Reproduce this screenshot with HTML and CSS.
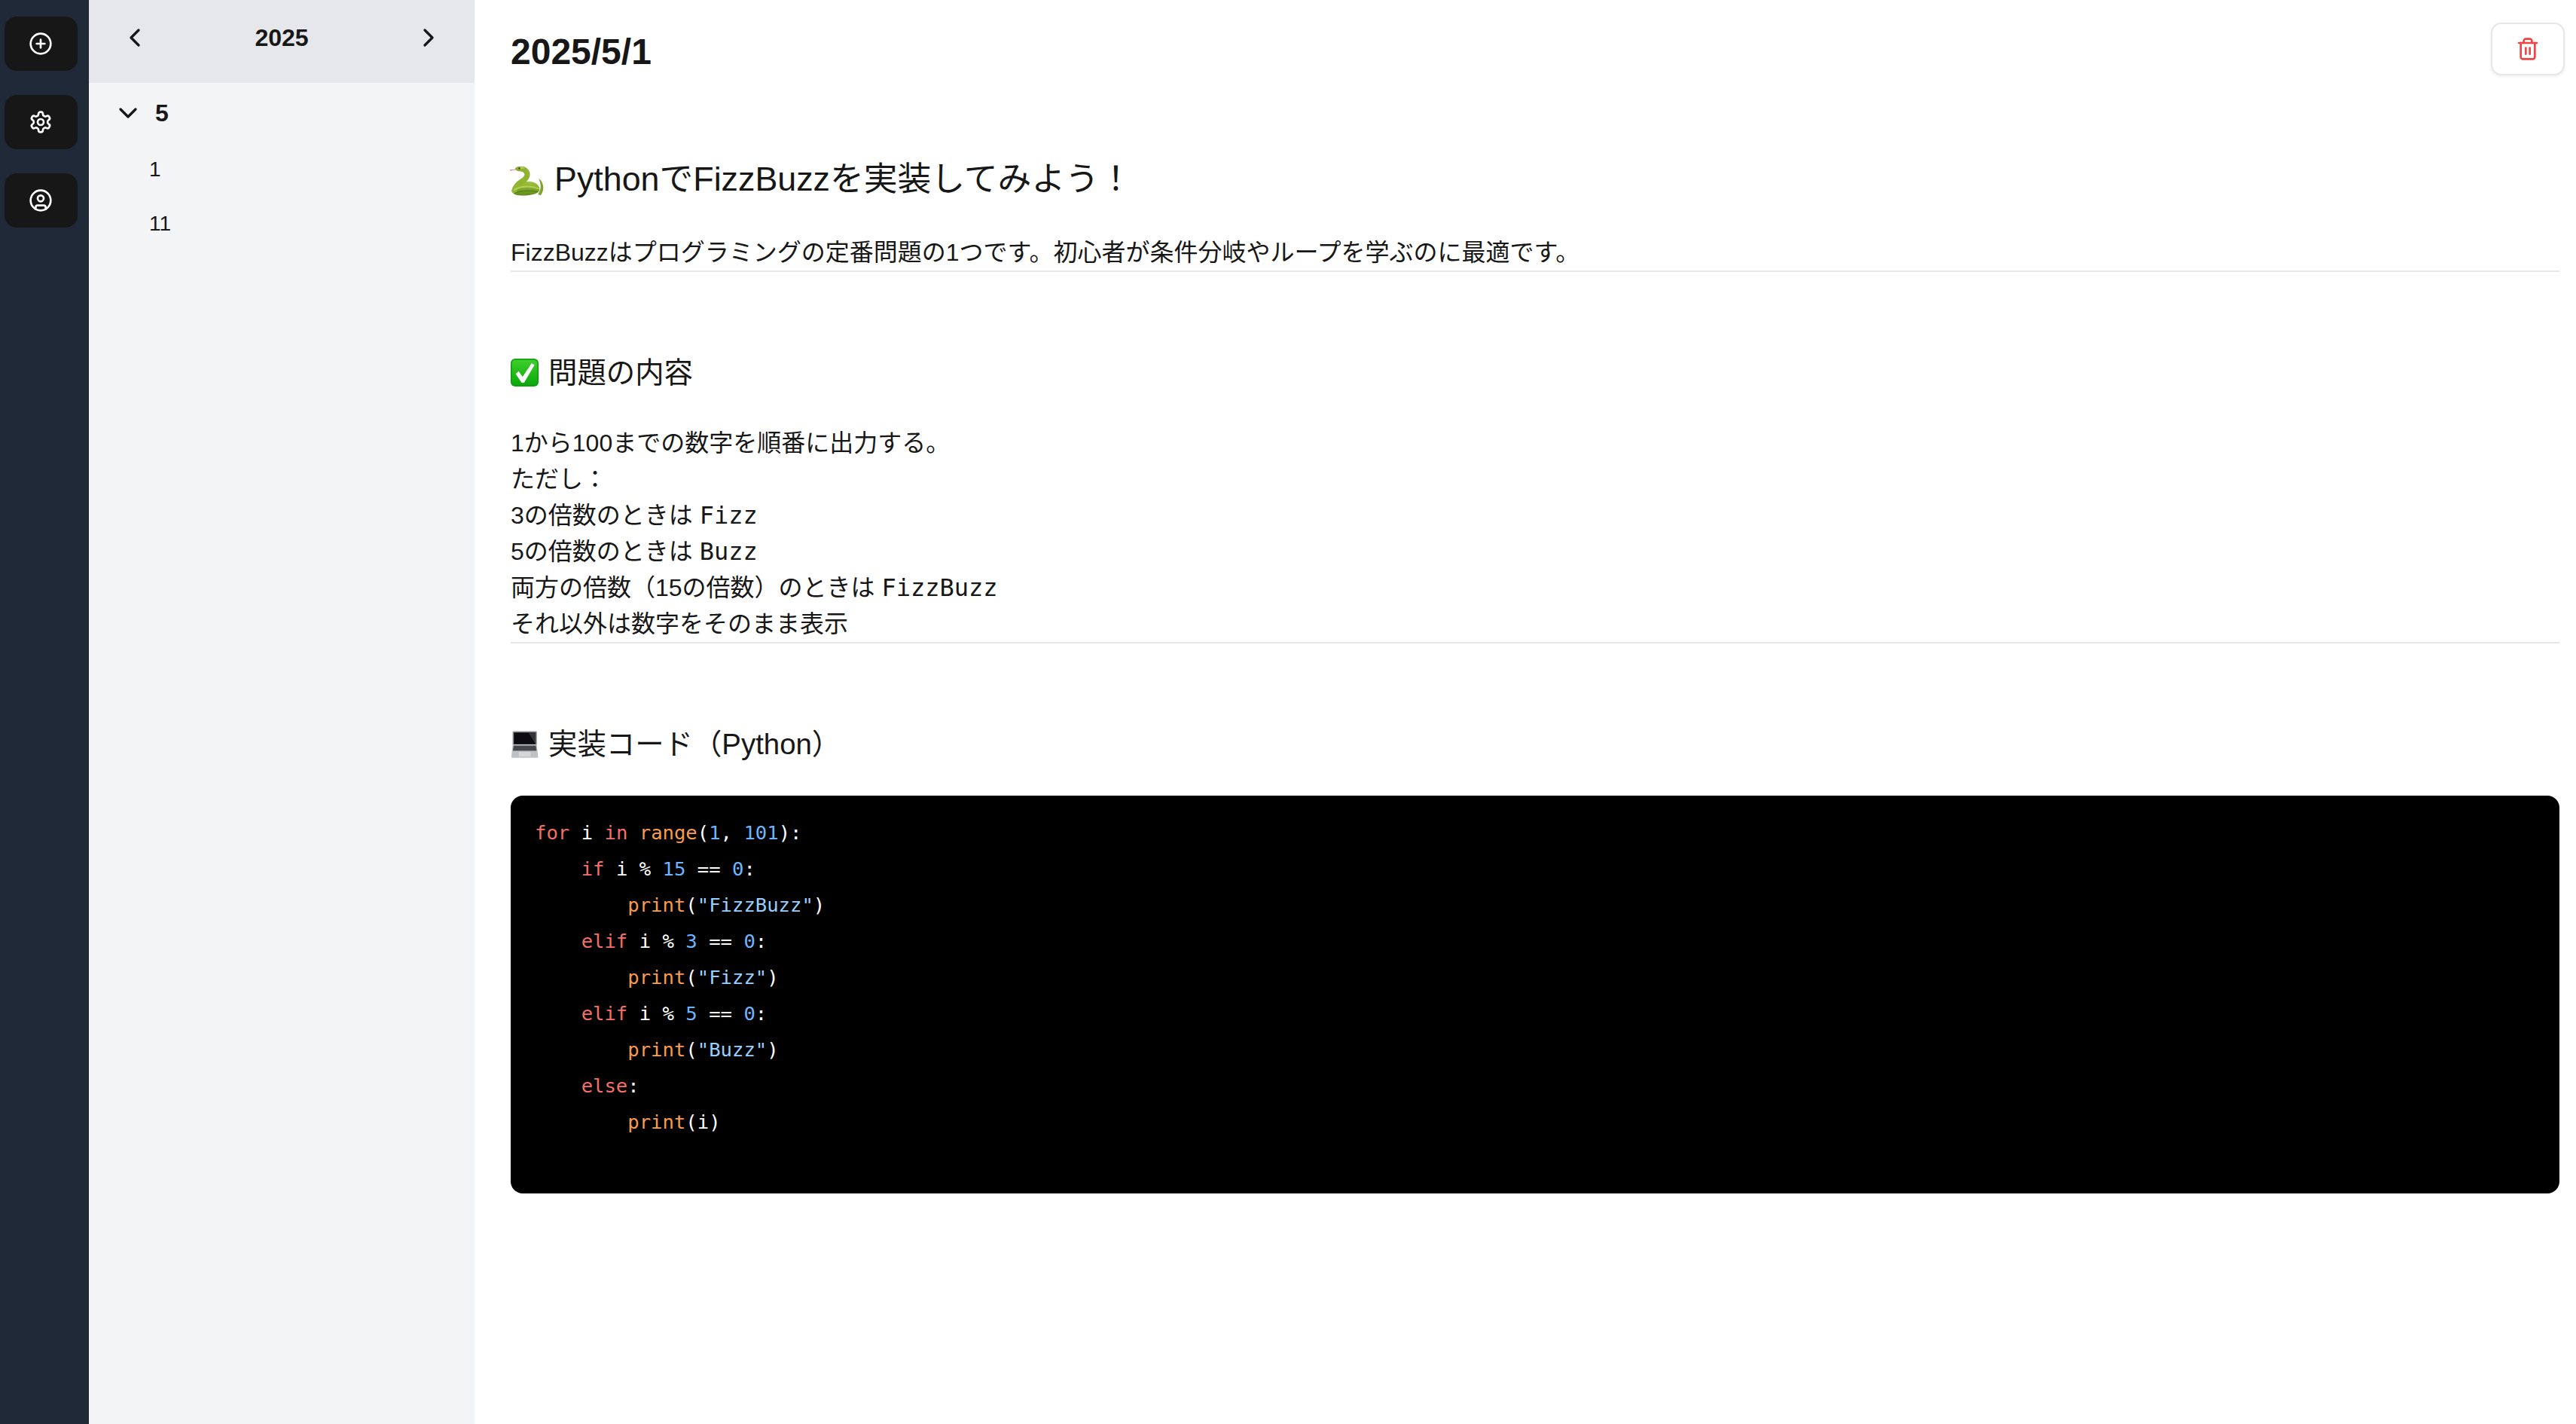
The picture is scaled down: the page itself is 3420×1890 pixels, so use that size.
FILE: index.html
```html
<!DOCTYPE html>
<html lang="ja">
<head>
<meta charset="utf-8">
<title>2025/5/1</title>
<link rel="stylesheet" href="styles.css">
</head>
<body>
<div class="app">
  <nav class="rail">
    <button class="rail-btn"><svg class="rail-icon" viewBox="0 0 24 24"><circle cx="12" cy="12" r="10"/><path d="M8 12h8"/><path d="M12 8v8"/></svg></button>
    <button class="rail-btn"><svg class="rail-icon" viewBox="0 0 24 24"><path d="M12.22 2h-.44a2 2 0 0 0-2 2v.18a2 2 0 0 1-1 1.73l-.43.25a2 2 0 0 1-2 0l-.15-.08a2 2 0 0 0-2.73.73l-.22.38a2 2 0 0 0 .73 2.73l.15.1a2 2 0 0 1 1 1.72v.51a2 2 0 0 1-1 1.74l-.15.09a2 2 0 0 0-.73 2.73l.22.38a2 2 0 0 0 2.73.73l.15-.08a2 2 0 0 1 2 0l.43.25a2 2 0 0 1 1 1.73V20a2 2 0 0 0 2 2h.44a2 2 0 0 0 2-2v-.18a2 2 0 0 1 1-1.73l.43-.25a2 2 0 0 1 2 0l.15.08a2 2 0 0 0 2.73-.73l.22-.39a2 2 0 0 0-.73-2.73l-.15-.08a2 2 0 0 1-1-1.74v-.5a2 2 0 0 1 1-1.74l.15-.09a2 2 0 0 0 .73-2.73l-.22-.38a2 2 0 0 0-2.73-.73l-.15.08a2 2 0 0 1-2 0l-.43-.25a2 2 0 0 1-1-1.73V4a2 2 0 0 0-2-2z"/><circle cx="12" cy="12" r="3"/></svg></button>
    <button class="rail-btn"><svg class="rail-icon" viewBox="0 0 24 24"><circle cx="12" cy="12" r="10"/><circle cx="12" cy="10" r="3"/><path d="M7 20.662V19a2 2 0 0 1 2-2h6a2 2 0 0 1 2 2v1.662"/></svg></button>
  </nav>
  <aside class="tree">
    <header class="year-bar">
      <svg class="chev" viewBox="0 0 24 24"><path d="m15 18-6-6 6-6"/></svg>
      <span class="year">2025</span>
      <svg class="chev" viewBox="0 0 24 24"><path d="m9 18 6-6-6-6"/></svg>
    </header>
    <div class="month">
      <svg class="chev" viewBox="0 0 24 24"><path d="m6 9 6 6 6-6"/></svg>
      <span class="month-name">5</span>
    </div>
    <ul class="days">
      <li class="day">1</li>
      <li class="day">11</li>
    </ul>
  </aside>
  <main class="content">
    <div class="title-row">
      <h1 class="title">2025/5/1</h1>
      <button class="delete-btn"><svg class="trash" viewBox="0 0 24 24"><path d="M3 6h18"/><path d="M19 6v14c0 1-1 2-2 2H7c-1 0-2-1-2-2V6"/><path d="M8 6V4c0-1 1-2 2-2h4c1 0 2 1 2 2v2"/><path d="M10 11v6"/><path d="M14 11v6"/></svg></button>
    </div>
    <article class="doc">
      <h2 class="h-lg"><svg class="emoji-snake" viewBox="22 35 140 118"><defs><linearGradient id="snake" x1="0" y1="0" x2="0" y2="1"><stop offset="0" stop-color="#a4c63f"/><stop offset="1" stop-color="#5f8a18"/></linearGradient></defs><path d="M138 84C155 92 166 125 146 151L135 147C150 125 148 105 138 84Z" fill="#7fa52a"/><path d="M70 98C110 88 146 104 141 130 136 152 72 156 46 149 24 143 28 120 46 111Z" fill="url(#snake)"/><path d="M76 46C100 56 96 80 70 95 54 105 44 116 40 132" class="snake-neck"/><path d="M40 128C70 112 112 112 136 124" class="snake-coil"/><path d="M42 142C72 130 110 130 134 138" class="snake-coil-dark"/><ellipse cx="66" cy="44" rx="23" ry="10.500" fill="#8db02f"/><ellipse cx="68" cy="40" rx="13" ry="4" fill="#b3cf5a"/><circle cx="60" cy="42" r="3.500" fill="#1c2a0a"/><path d="M46 47C38 49 30 47 23 52M30 49l-7-1" class="snake-tongue"/></svg> PythonでFizzBuzzを実装してみよう！</h2>
      <p class="para">FizzBuzzはプログラミングの定番問題の1つです。初心者が条件分岐やループを学ぶのに最適です。</p>
      <hr class="rule">
      <h3 class="h-md"><svg class="emoji" viewBox="24 27 112 112"><defs><linearGradient id="check" x1="0" y1="0" x2="0" y2="1"><stop offset="0" stop-color="#3ecf2c"/><stop offset="1" stop-color="#0aa80a"/></linearGradient></defs><rect x="24" y="27" width="112" height="112" rx="18" fill="#0f9f0c"/><rect x="29" y="32" width="102" height="102" rx="14" fill="url(#check)"/><path d="M44 88 56 78 72 100 108 46 120 52 78 124 68 124Z" fill="#fff"/></svg> 問題の内容</h3>
      <p class="para">1から100までの数字を順番に出力する。<br>ただし：<br>3の倍数のときは <code class="inline">Fizz</code><br>5の倍数のときは <code class="inline">Buzz</code><br>両方の倍数（15の倍数）のときは <code class="inline">FizzBuzz</code><br>それ以外は数字をそのまま表示</p>
      <hr class="rule">
      <h3 class="h-md"><svg class="emoji" viewBox="24 15 116 116"><path d="M36 20H129Q133 20 133 24V76H32V24Q32 20 36 20Z" fill="#8e9093"/><path d="M37 25H128V74H37Z" fill="#0c0c0e"/><path d="M98 25H128V74Z" fill="#34353a"/><path d="M32 76H133L138 126Q138 130 134 130H31Q27 130 27 126Z" fill="#bfc1c4"/><path d="M36 79H129L132 101H33Z" fill="#55575b"/><path d="M38 84H127M37 90H128M36 96H129" stroke="#2c2d30" stroke-width="2"/><path d="M58 106H107V125H58Z" fill="#d4d6d8"/></svg> 実装コード（Python）</h3>
<pre class="code"><span class="kw">for</span> i <span class="kw">in</span> <span class="fn">range</span>(<span class="num">1</span>, <span class="num">101</span>):
    <span class="kw">if</span> i % <span class="num">15</span> == <span class="num">0</span>:
        <span class="fn">print</span>(<span class="str">"FizzBuzz"</span>)
    <span class="kw">elif</span> i % <span class="num">3</span> == <span class="num">0</span>:
        <span class="fn">print</span>(<span class="str">"Fizz"</span>)
    <span class="kw">elif</span> i % <span class="num">5</span> == <span class="num">0</span>:
        <span class="fn">print</span>(<span class="str">"Buzz"</span>)
    <span class="kw">else</span>:
        <span class="fn">print</span>(i)
</pre>
    </article>
  </main>
</div>
</body>
</html>
```
FILE: styles.css
```css
* { box-sizing: border-box; }
html, body { margin: 0; height: 100%; }
body {
  font-family: "Liberation Sans", "Noto Sans CJK JP", sans-serif;
  color: #171717;
  background: #fff;
}
.app { display: flex; height: 1890px; overflow: hidden; }

.rail {
  width: 118px; flex: none; background: #1f2937;
  display: flex; flex-direction: column; gap: 32px;
  padding: 22px 15px 0 6px;
}
.rail-btn {
  width: 97px; height: 72px; border: 0; border-radius: 16px; background: #171717;
  display: flex; align-items: center; justify-content: center; padding: 0 2px 0 0;
}
.rail-icon { width: 32px; height: 32px; fill: none; stroke: #fff; stroke-width: 2; stroke-linecap: round; stroke-linejoin: round; }

.tree { width: 512px; flex: none; background: #f3f4f6; }
.year-bar {
  height: 110px; background: #e5e7eb; display: flex; align-items: flex-start;
  justify-content: space-between; padding: 30px 41px 0;
}
.year { font-size: 32px; font-weight: 700; line-height: 40px; }
.chev { width: 40px; height: 40px; flex: none; fill: none; stroke: #171717; stroke-width: 2; stroke-linecap: round; stroke-linejoin: round; }
.month { display: flex; align-items: center; gap: 16px; padding: 20px 32px 0; }
.month-name { font-size: 32px; font-weight: 700; line-height: 40px; }
.days { list-style: none; margin: 19px 0 0; padding: 0 0 0 80px; }
.day { font-size: 28px; line-height: 72px; }

.content { flex: 1; min-width: 0; padding: 30px 15px 0 48px; }
.title-row { display: flex; justify-content: space-between; align-items: flex-start; }
.title { margin: 3px 0 0; font-size: 48px; font-weight: 700; line-height: 72px; }
.delete-btn {
  width: 98px; height: 70px; background: #fff; border: 2px solid #e5e7eb; border-radius: 14px;
  box-shadow: 0 2px 4px rgba(0,0,0,.06); display: flex; align-items: center; justify-content: center; padding: 0;
}
.trash { width: 32px; height: 32px; fill: none; stroke: #ef4444; stroke-width: 2; stroke-linecap: round; stroke-linejoin: round; }

.doc { padding: 99px 7px 0 0; }
.h-lg { margin: 0; font-size: 44.8px; font-weight: 400; line-height: 67px; display: flex; align-items: center; gap: 13px; }
.h-md { margin: 104px 0 0; font-size: 38.4px; font-weight: 400; line-height: 59px; display: flex; align-items: center; gap: 13px; }
.emoji { width: 37px; height: 37px; flex: none; }
.emoji-snake { width: 46px; height: 39px; flex: none; margin: 6px 0 0 -1px; }
.snake-neck { fill: none; stroke: #8fb531; stroke-width: 22; stroke-linecap: round; }
.snake-coil { fill: none; stroke: #b0cf55; stroke-width: 7; stroke-linecap: round; }
.snake-coil-dark { fill: none; stroke: #4f7612; stroke-width: 3; stroke-linecap: round; }
.snake-tongue { fill: none; stroke: #d98a8a; stroke-width: 3; }
.para { margin: 40px 0 0; font-size: 32px; line-height: 48px; }
.rule { border: 0; border-top: 2px solid #e5e7eb; margin: 0; }
.inline { font-family: "DejaVu Sans Mono", monospace; font-size: 32px; }
.code {
  margin: 39px 0 0; background: #000; color: #fff; border-radius: 16px;
  padding: 25px 32px; height: 528px;
  font-family: "DejaVu Sans Mono", monospace; font-size: 25.6px; line-height: 48px;
}
.kw { color: #f47067; }
.fn { color: #f69d50; }
.num { color: #6cb6ff; }
.str { color: #96d0ff; }
```
